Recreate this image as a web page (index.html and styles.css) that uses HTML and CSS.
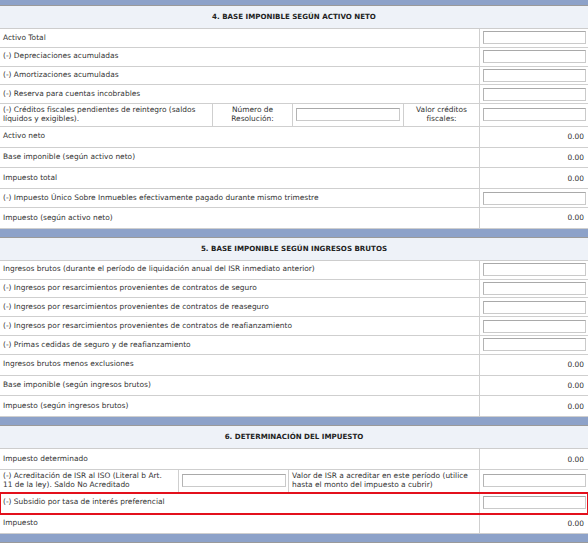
FILE: index.html
```html
<!DOCTYPE html>
<html lang="es">
<head>
  <meta charset="UTF-8" />
  <title>Determinación del impuesto</title>
  <link rel="stylesheet" href="styles.css">
</head>
<body>
  <div class="form">
    <!-- 4. Activo neto -->
    <div class="bar bar-top"></div>
    <div class="section-title">4. BASE IMPONIBLE SEGÚN ACTIVO NETO</div>
    <div class="row"><div class="label">Activo Total</div><div class="value"><input type="text"></div></div>
    <div class="row"><div class="label">(-) Depreciaciones acumuladas</div><div class="value"><input type="text"></div></div>
    <div class="row"><div class="label">(-) Amortizaciones acumuladas</div><div class="value"><input type="text"></div></div>
    <div class="row"><div class="label">(-) Reserva para cuentas incobrables</div><div class="value"><input type="text"></div></div>
    <div class="row two">
      <div class="label credits-label">(-) Créditos fiscales pendientes de reintegro (saldos líquidos y exigibles).</div>
      <div class="cell caption resol">Número de Resolución:</div>
      <div class="cell field resol-field"><input type="text"></div>
      <div class="cell caption valor">Valor créditos fiscales:</div>
      <div class="value"><input type="text"></div>
    </div>
    <div class="row sum"><div class="label">Activo neto</div><div class="value">0.00</div></div>
    <div class="row sum"><div class="label">Base imponible (según activo neto)</div><div class="value">0.00</div></div>
    <div class="row sum"><div class="label">Impuesto total</div><div class="value">0.00</div></div>
    <div class="row"><div class="label">(-) Impuesto Único Sobre Inmuebles efectivamente pagado durante mismo trimestre</div><div class="value"><input type="text"></div></div>
    <div class="row sum"><div class="label">Impuesto (según activo neto)</div><div class="value">0.00</div></div>

    <!-- 5. Ingresos brutos -->
    <div class="bar"></div>
    <div class="section-title">5. BASE IMPONIBLE SEGÚN INGRESOS BRUTOS</div>
    <div class="row"><div class="label">Ingresos brutos (durante el período de liquidación anual del ISR inmediato anterior)</div><div class="value"><input type="text"></div></div>
    <div class="row"><div class="label">(-) Ingresos por resarcimientos provenientes de contratos de seguro</div><div class="value"><input type="text"></div></div>
    <div class="row"><div class="label">(-) Ingresos por resarcimientos provenientes de contratos de reaseguro</div><div class="value"><input type="text"></div></div>
    <div class="row"><div class="label">(-) Ingresos por resarcimientos provenientes de contratos de reafianzamiento</div><div class="value"><input type="text"></div></div>
    <div class="row"><div class="label">(-) Primas cedidas de seguro y de reafianzamiento</div><div class="value"><input type="text"></div></div>
    <div class="row sum"><div class="label">Ingresos brutos menos exclusiones</div><div class="value">0.00</div></div>
    <div class="row sum"><div class="label">Base imponible (según ingresos brutos)</div><div class="value">0.00</div></div>
    <div class="row sum"><div class="label">Impuesto (según ingresos brutos)</div><div class="value">0.00</div></div>

    <!-- 6. Determinación -->
    <div class="bar"></div>
    <div class="section-title">6. DETERMINACIÓN DEL IMPUESTO</div>
    <div class="row sum"><div class="label">Impuesto determinado</div><div class="value">0.00</div></div>
    <div class="row two">
      <div class="label isr-label">(-) Acreditación de ISR al ISO (Literal b Art. 11 de la ley). Saldo No Acreditado</div>
      <div class="cell field isr-field"><input type="text"></div>
      <div class="cell isr-text">Valor de ISR a acreditar en este período (utilice hasta el monto del impuesto a cubrir)</div>
      <div class="value"><input type="text"></div>
    </div>
    <div class="row sum marked"><div class="label">(-) Subsidio por tasa de interés preferencial</div><div class="value"><input type="text"></div></div>
    <div class="row sum"><div class="label">Impuesto</div><div class="value">0.00</div></div>
    <div class="bar"></div>
  </div>
</body>
</html>
```

FILE: styles.css
```css
body {
  margin: 0;
  background: #fff;
  font-family: 'DejaVu Sans', Verdana, sans-serif;
  font-size: 7.45px;
  color: #333;
}
.form {
  width: 588px;
}
.bar {
  height: 8px;
  background: #8da2c9;
  border-bottom: 1px solid #9a9a9a;
}
.bar-top {
  height: 5px;
}
.section-title {
  height: 22px;
  line-height: 22px;
  background: #eef2f8;
  border-bottom: 1px solid #cdcdcd;
  text-align: center;
  font-size: 7.1px;
  font-weight: bold;
  color: #222;
}
.row {
  display: flex;
  height: 18.8px;
  border-bottom: 1px solid #cfcfcf;
  box-sizing: border-box;
}
.row.sum {
  height: 20.8px;
}
.row.two {
  height: 22.6px;
}
.row.marked {
  height: 21px;
  outline: 2px solid #e3101c;
  outline-offset: -1px;
  position: relative;
}
.label {
  flex: 1;
  display: flex;
  align-items: center;
  padding: 0 3px;
  line-height: 8.6px;
}
.cell {
  display: flex;
  align-items: center;
  border-left: 1px solid #cfcfcf;
  box-sizing: border-box;
  line-height: 8.6px;
}
.caption {
  justify-content: center;
  text-align: center;
}
.credits-label {
  flex: 0 0 212px;
  box-sizing: border-box;
}
.resol {
  width: 80px;
}
.resol-field {
  width: 111px;
}
.valor {
  width: 76px;
}
.isr-label {
  flex: 0 0 178px;
  box-sizing: border-box;
  padding-right: 10px;
}
.isr-field {
  width: 110px;
}
.isr-text {
  flex: 1;
  padding: 0 3px;
}
.field {
  padding-left: 3px;
}
.value {
  flex: 0 0 109px;
  display: flex;
  align-items: center;
  justify-content: flex-end;
  box-sizing: border-box;
  border-left: 1px solid #cfcfcf;
  padding: 0 4px 0 3px;
}
input {
  width: 103px;
  height: 13px;
  margin: 0;
  padding: 0;
  box-sizing: border-box;
  border: 1px solid #cacaca;
  border-top-color: #a9a9a9;
  border-left-color: #b4b4b4;
  background: #fff;
  font: inherit;
}
.value input {
  margin-right: -2px;
}
.field input {
  width: 104px;
}
```
